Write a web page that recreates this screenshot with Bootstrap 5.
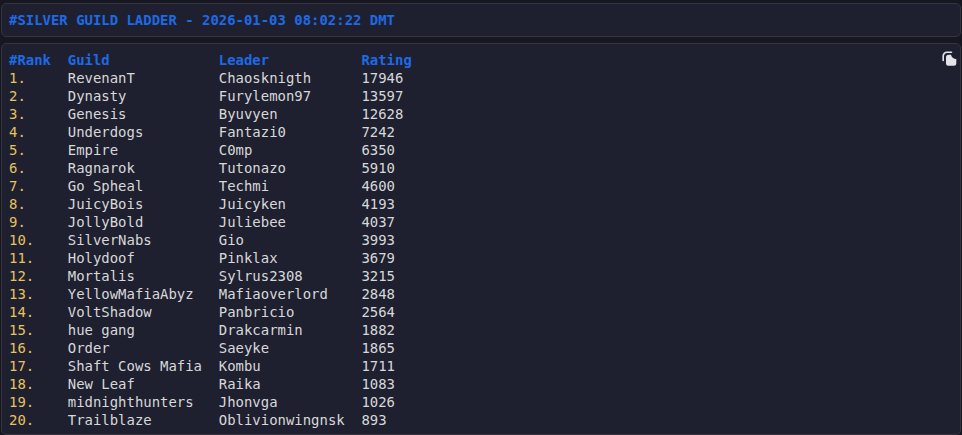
<!doctype html>
<html lang="en">
<head>
<meta charset="utf-8">
<title>Silver Guild Ladder</title>
<link href="https://cdn.jsdelivr.net/npm/bootstrap@5.3.0/dist/css/bootstrap.min.css" rel="stylesheet">
<style>
html,body{height:100%}
body{background:#161720;color:#d8d8d8;font-family:"DejaVu Sans Mono",monospace;overflow:hidden}
.panel{background:#1e2030;border:1px solid #34353f;border-radius:5px}
.head-panel{margin:3px 1px 6px;padding:6px 7px;height:34px}
.head-title{color:#1f6ae6;font-family:"DejaVu Sans Mono",monospace;font-size:13.95px;font-weight:700;line-height:20px;margin:0}
.ladder-panel{margin:0 1px;padding:7px 7px 0;height:392px;position:relative}
.ladder{font:13.95px/18px "DejaVu Sans Mono",monospace;color:#d8d8d8;margin:0;overflow:visible;background:none}
.th{color:#1f6ae6;font-weight:700}
.rk{color:#e8c35a}
.copy{position:absolute;right:2px;top:7px;width:16px;height:16px;padding:0;border:0;background:none;line-height:0}
</style>
</head>
<body>
<div class="panel head-panel d-flex align-items-center"><h1 class="head-title">#SILVER GUILD LADDER - 2026-01-03 08:02:22 DMT</h1></div>
<div class="panel ladder-panel">
<button class="copy" type="button" aria-label="Copy"><svg width="16" height="16" viewBox="0 0 16 16"><path d="M1.2 9.500V5a3.800 3.800 0 0 1 3.800-3.800H9.500" fill="none" stroke="#e4e4e8" stroke-width="1.6" stroke-linecap="round"/><path d="M4 6.500A2.800 2.800 0 0 1 6.800 3.700H9c.6 2.400 2.400 4 5.300 4.400V12.500a2.300 2.300 0 0 1-2.300 2.300H6.300A2.300 2.300 0 0 1 4 12.500z" fill="#e4e4e8"/></svg></button>
<pre class="ladder"><span class="th">#Rank  Guild             Leader           Rating</span>
<span class="rk">1.</span>     RevenanT          Chaosknigth      17946
<span class="rk">2.</span>     Dynasty           Furylemon97      13597
<span class="rk">3.</span>     Genesis           Byuvyen          12628
<span class="rk">4.</span>     Underdogs         Fantazi0         7242
<span class="rk">5.</span>     Empire            C0mp             6350
<span class="rk">6.</span>     Ragnarok          Tutonazo         5910
<span class="rk">7.</span>     Go Spheal         Techmi           4600
<span class="rk">8.</span>     JuicyBois         Juicyken         4193
<span class="rk">9.</span>     JollyBold         Juliebee         4037
<span class="rk">10.</span>    SilverNabs        Gio              3993
<span class="rk">11.</span>    Holydoof          Pinklax          3679
<span class="rk">12.</span>    Mortalis          Sylrus2308       3215
<span class="rk">13.</span>    YellowMafiaAbyz   Mafiaoverlord    2848
<span class="rk">14.</span>    VoltShadow        Panbricio        2564
<span class="rk">15.</span>    hue gang          Drakcarmin       1882
<span class="rk">16.</span>    Order             Saeyke           1865
<span class="rk">17.</span>    Shaft Cows Mafia  Kombu            1711
<span class="rk">18.</span>    New Leaf          Raika            1083
<span class="rk">19.</span>    midnighthunters   Jhonvga          1026
<span class="rk">20.</span>    Trailblaze        Oblivionwingnsk  893</pre>
</div>
<script src="https://cdn.jsdelivr.net/npm/bootstrap@5.3.0/dist/js/bootstrap.bundle.min.js"></script>
</body>
</html>
